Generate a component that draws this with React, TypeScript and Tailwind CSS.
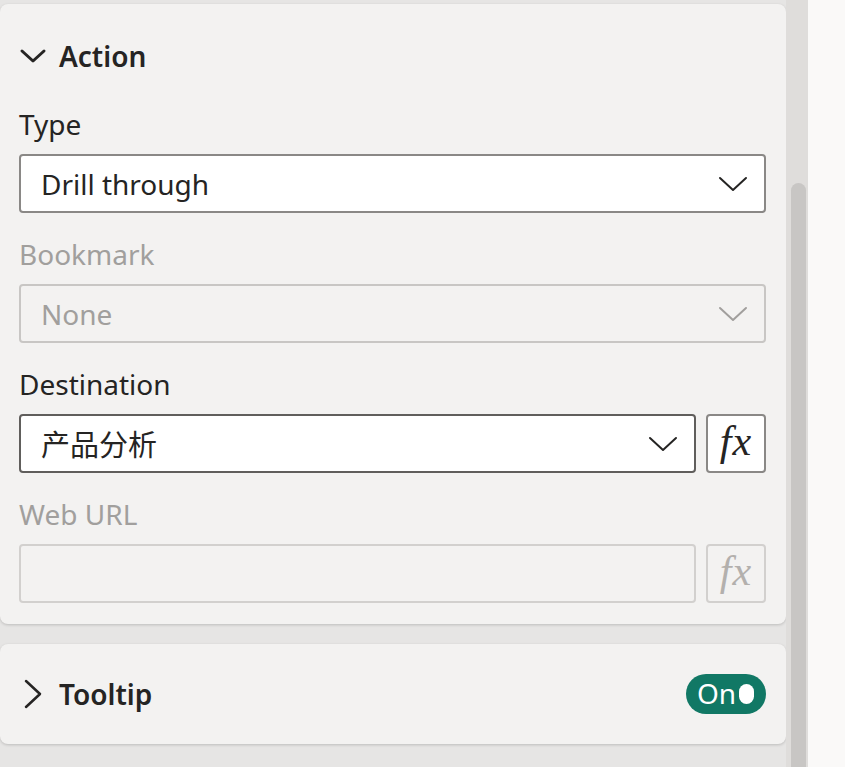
import React from "react";

const font = { fontFamily: '"Noto Sans", "Open Sans", "Noto Sans CJK SC", sans-serif' };

function ChevronDown({ color = "#252423", w = 30, h = 16, sw = 2 }: { color?: string; w?: number; h?: number; sw?: number }) {
  return (
    <svg width={w} height={h} viewBox={`0 0 ${w} ${h}`} fill="none">
      <path d={`M${sw} ${sw} L${w / 2} ${h - sw} L${w - sw} ${sw}`} stroke={color} strokeWidth={sw} strokeLinecap="round" strokeLinejoin="round" />
    </svg>
  );
}

function ChevronRight() {
  return (
    <svg width="18" height="30" viewBox="0 0 18 30" fill="none">
      <path d="M2 2 L16 15 L2 28" stroke="#252423" strokeWidth="2.5" strokeLinecap="round" strokeLinejoin="round" />
    </svg>
  );
}

function Fx({ disabled }: { disabled?: boolean }) {
  return (
    <div
      className={`w-[60px] h-[59px] shrink-0 rounded-[4px] border-2 flex items-center justify-center ${
        disabled ? "border-[#d2d0ce] bg-[#f3f2f1] text-[#b3b0ad]" : "border-[#8a8886] bg-white text-[#252423]"
      }`}
    >
      <span className="italic text-[42px] leading-none -mt-[6px] tracking-[1px]" style={{ fontFamily: '"Liberation Serif", "DejaVu Serif", serif' }}>
        fx
      </span>
    </div>
  );
}

export default function App() {
  return (
    <div className="w-[845px] h-[767px] overflow-hidden bg-[#faf9f8] flex" style={font}>
      <div className="w-[786px] h-full bg-[#e6e5e4] pt-[4px] flex flex-col gap-[20px]">
        {/* Action card */}
        <div className="bg-[#f3f2f1] rounded-[8px] shadow-[0_1px_3px_rgba(0,0,0,0.18)] h-[620px] pl-[19px] pr-[20px]">
          <div className="flex items-center h-[102px] pt-[2px]">
            <div className="w-[40px] flex items-center">
              <ChevronDown w={28} h={16} sw={3} />
            </div>
            <span className="text-[28px] font-semibold text-[#252423]">Action</span>
          </div>

          <div className="text-[28px] text-[#252423] leading-[32px] h-[48px] pt-[2px]">Type</div>
          <div className="h-[59px] bg-white border-2 border-[#8a8886] rounded-[4px] flex items-center justify-between pl-[20px] pr-[16px]">
            <span className="text-[28px] text-[#252423]">Drill through</span>
            <ChevronDown />
          </div>

          <div className="text-[28px] text-[#a19f9d] leading-[32px] h-[71px] pt-[25px]">Bookmark</div>
          <div className="h-[59px] bg-[#f3f2f1] border-2 border-[#c8c6c4] rounded-[4px] flex items-center justify-between pl-[20px] pr-[16px]">
            <span className="text-[28px] text-[#a19f9d]">None</span>
            <ChevronDown color="#a19f9d" />
          </div>

          <div className="text-[28px] text-[#252423] leading-[32px] h-[71px] pt-[25px]">Destination</div>
          <div className="flex gap-[10px]">
            <div className="flex-1 h-[59px] bg-white border-2 border-[#605e5c] rounded-[4px] flex items-center justify-between pl-[20px] pr-[16px]">
              <span className="text-[29px] text-[#252423]" style={{ fontFamily: '"Noto Sans CJK SC", sans-serif' }}>产品分析</span>
              <ChevronDown />
            </div>
            <Fx />
          </div>

          <div className="text-[28px] text-[#a19f9d] leading-[32px] h-[71px] pt-[25px]">Web URL</div>
          <div className="flex gap-[10px]">
            <div className="flex-1 h-[59px] bg-[#f3f2f1] border-2 border-[#d2d0ce] rounded-[4px]" />
            <Fx disabled />
          </div>
        </div>

        {/* Tooltip card */}
        <div className="bg-[#f3f2f1] rounded-[8px] shadow-[0_1px_3px_rgba(0,0,0,0.18)] h-[100px] pl-[24px] pr-[20px] flex items-center justify-between">
          <div className="flex items-center">
            <div className="w-[35px] flex items-center">
              <ChevronRight />
            </div>
            <span className="text-[28px] font-semibold text-[#252423]">Tooltip</span>
          </div>
          <div className="w-[80px] h-[40px] rounded-full bg-[#117865] flex items-center pl-[11px] pr-[12px] justify-between">
            <span className="text-[28px] text-white leading-none -mt-[3px]">On</span>
            <span className="w-[15px] h-[20px] rounded-full bg-white" />
          </div>
        </div>
      </div>

      {/* scrollbar */}
      <div className="w-[22px] h-full bg-[#dfdddb] flex flex-col pl-[5px] pr-[2px]">
        <div className="h-[183px]" />
        <div className="flex-1 bg-[#c8c6c4] rounded-t-[8px]" />
      </div>
      <div className="flex-1 bg-[#faf9f8]" />
    </div>
  );
}
